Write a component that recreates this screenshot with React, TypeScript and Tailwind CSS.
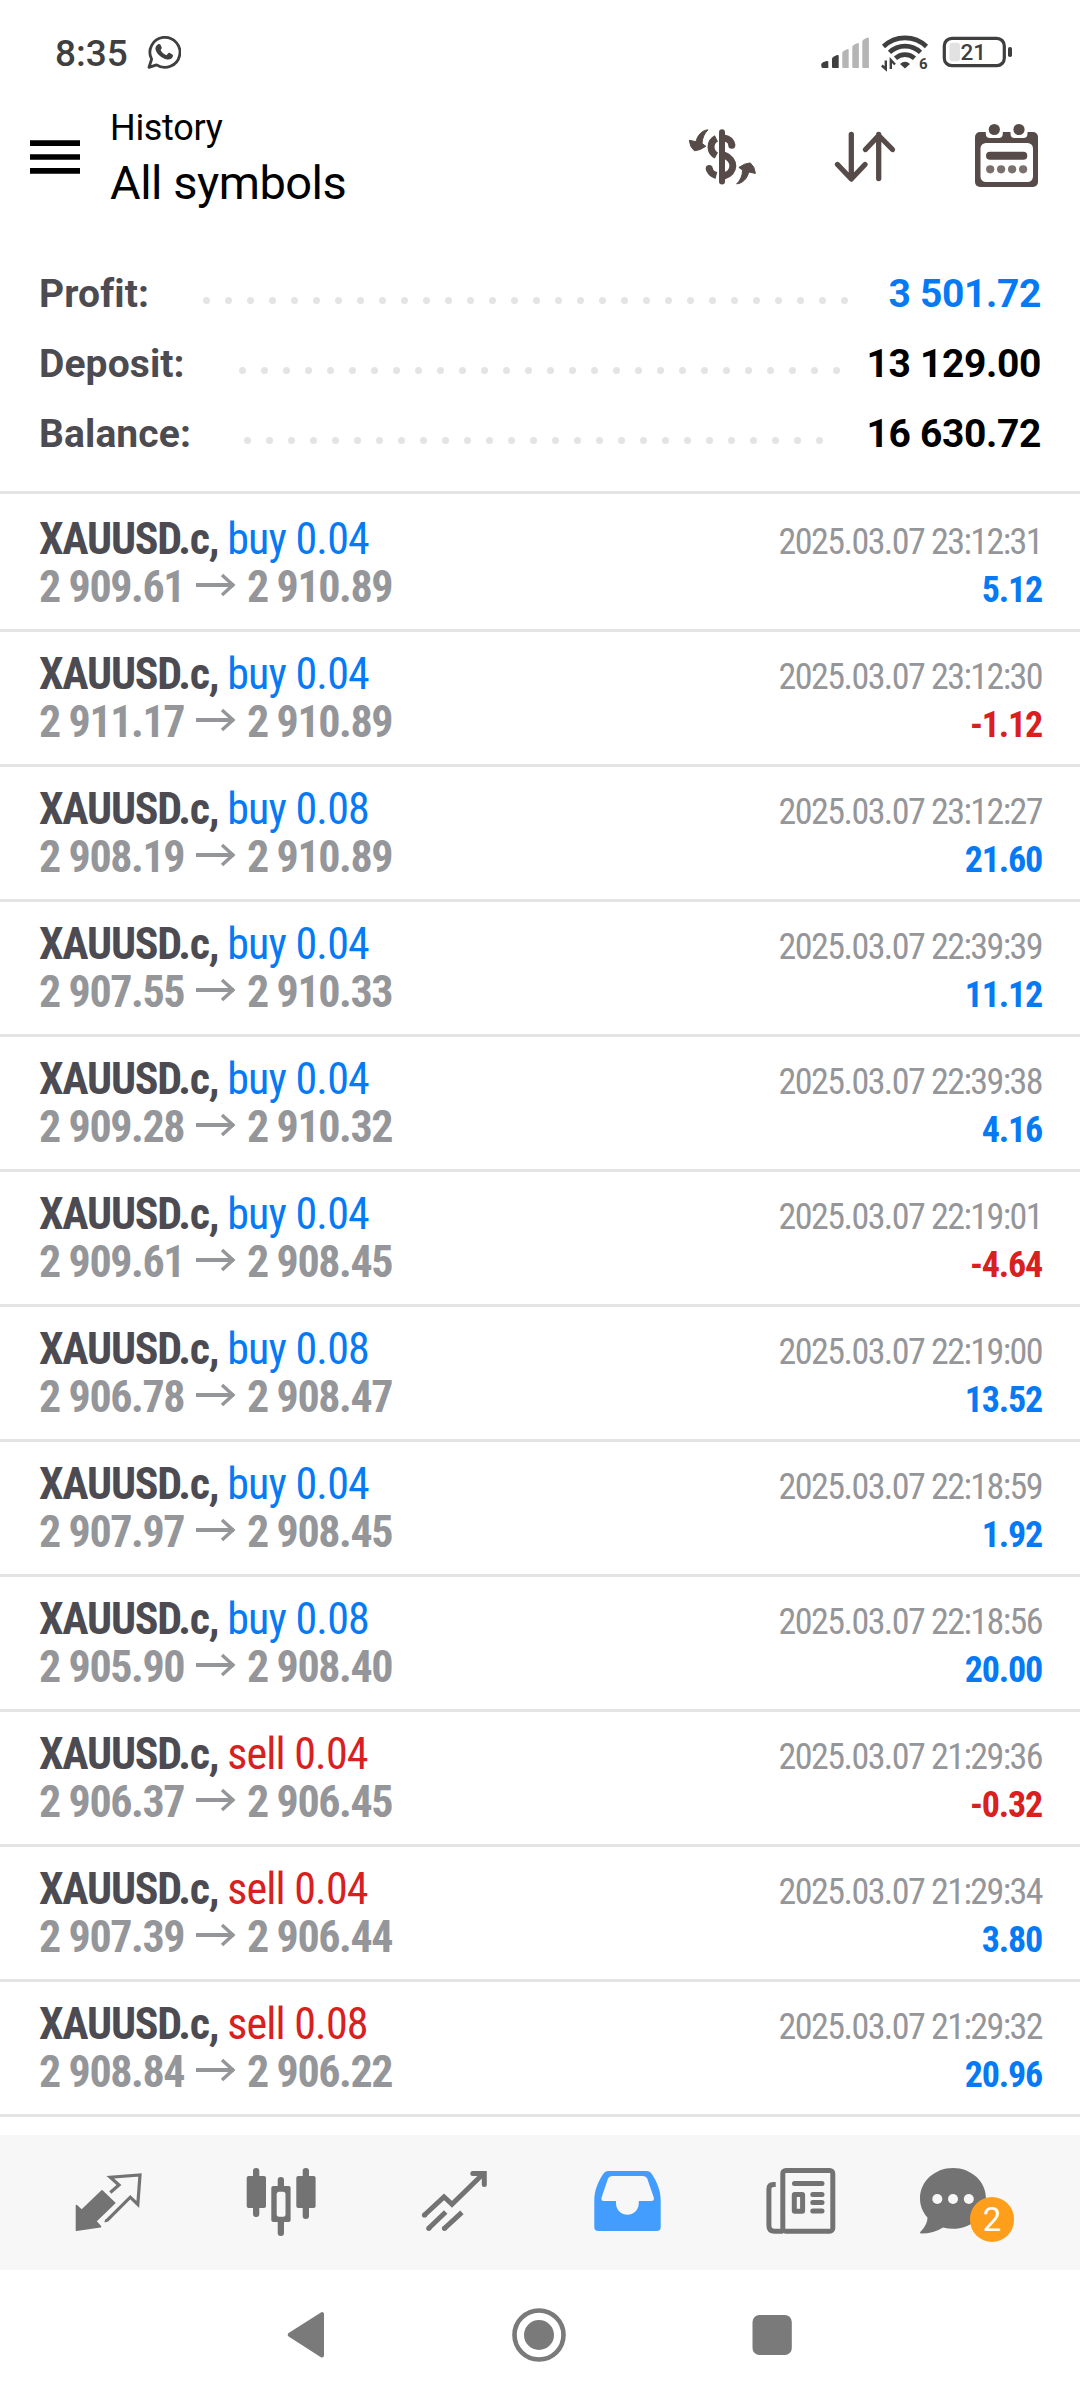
import type { ReactNode } from "react";
import clsx from "clsx";

const SUMMARY = [
  { label: "Profit:", value: "3 501.72", dots: 30, color: "text-[#067af5]", pad: "pr-[193px]" },
  { label: "Deposit:", value: "13 129.00", dots: 28, color: "text-black", pad: "pr-[201px]" },
  { label: "Balance:", value: "16 630.72", dots: 27, color: "text-black", pad: "pr-[218px]" },
];

const DEALS = [
  { side: "buy", lots: "0.04", open: "2 909.61", close: "2 910.89", time: "2025.03.07 23:12:31", profit: "5.12" },
  { side: "buy", lots: "0.04", open: "2 911.17", close: "2 910.89", time: "2025.03.07 23:12:30", profit: "-1.12" },
  { side: "buy", lots: "0.08", open: "2 908.19", close: "2 910.89", time: "2025.03.07 23:12:27", profit: "21.60" },
  { side: "buy", lots: "0.04", open: "2 907.55", close: "2 910.33", time: "2025.03.07 22:39:39", profit: "11.12" },
  { side: "buy", lots: "0.04", open: "2 909.28", close: "2 910.32", time: "2025.03.07 22:39:38", profit: "4.16" },
  { side: "buy", lots: "0.04", open: "2 909.61", close: "2 908.45", time: "2025.03.07 22:19:01", profit: "-4.64" },
  { side: "buy", lots: "0.08", open: "2 906.78", close: "2 908.47", time: "2025.03.07 22:19:00", profit: "13.52" },
  { side: "buy", lots: "0.04", open: "2 907.97", close: "2 908.45", time: "2025.03.07 22:18:59", profit: "1.92" },
  { side: "buy", lots: "0.08", open: "2 905.90", close: "2 908.40", time: "2025.03.07 22:18:56", profit: "20.00" },
  { side: "sell", lots: "0.04", open: "2 906.37", close: "2 906.45", time: "2025.03.07 21:29:36", profit: "-0.32" },
  { side: "sell", lots: "0.04", open: "2 907.39", close: "2 906.44", time: "2025.03.07 21:29:34", profit: "3.80" },
  { side: "sell", lots: "0.08", open: "2 908.84", close: "2 906.22", time: "2025.03.07 21:29:32", profit: "20.96" },
];

const BLUE = "text-[#067af5]";
const RED = "text-[#d82020]";

function StatusBar() {
  return (
    <div className="flex h-[104px] items-center pl-[55px] pr-[67px] text-[#3f3f3f]">
      <span className="w-[92px] pt-[3px] text-[37px] font-medium leading-[44px]">8:35</span>
      <svg width="34" height="34" viewBox="0 0 34 34" fill="none">
        <path d="M2 32.3 4.6 24.2A15 15 0 1 1 9.6 29.8Z" stroke="currentColor" strokeWidth="2.8" strokeLinejoin="round" />
        <path
          d="M10.8 9.4c1.2-.8 2.4-.5 2.8.5l1.1 2.7c.3.8-.4 1.5-1.1 2.4 1.3 2.5 3.2 4.2 5.8 5.3l1.9-2.1c.5-.5 1-.4 1.6-.1l2.4 1.3c.8.5.8 1.1.5 2.2-.7 2.3-3.1 3.4-5.6 2.9-5.9-1.2-10.2-5.2-11.6-9.7-.6-2.3.4-4.3 2.2-5.4Z"
          fill="currentColor"
        />
      </svg>
      <div className="ml-auto flex items-center">
        <svg width="50" height="34" viewBox="0 0 50 34">
          <path d="M1.3 31V29.5Q1.3 28 3 27.3L6.5 26Q8.3 25.5 8.3 27V33H2.8Q1.3 33 1.3 31Z" fill="currentColor" />
          <path d="M12 32V24Q12 22.5 13.5 21.7L17 20Q18.7 19.5 18.7 21V33H13Q12 33 12 32Z" fill="currentColor" />
          <g fill="#b5b5b5">
            <path d="M22.3 32V18Q22.3 16.5 24 15.7L27 14.2Q28.7 13.7 28.7 15V33H23.3Q22.3 33 22.3 32Z" />
            <path d="M32.3 32V12Q32.3 10.5 34 9.7L37 8.2Q38.9 7.7 38.9 9V33H33.3Q32.3 33 32.3 32Z" />
            <path d="M42.3 32V6.5Q42.3 5 44 4.2L47 2.7Q48.9 2.2 48.9 3.5V33H43.3Q42.3 33 42.3 32Z" />
          </g>
        </svg>
        <svg className="ml-[11px] overflow-visible" width="48" height="36" viewBox="0 0 48 36">
          <g fill="none" stroke="currentColor" strokeWidth="4.6">
            <path d="M2.5 12.5A31 31 0 0 1 45.5 12.5" />
            <path d="M8.5 18.3A22.5 22.5 0 0 1 39.5 18.3" />
            <path d="M14.5 24.3A14 14 0 0 1 33.5 24.3" />
          </g>
          <path d="M24 34.5 19 30Q24 25.5 29 30Z" fill="currentColor" />
          <path d="M4.8 26.5V35L.8 31.5M9.8 35V26L14 30.5" fill="none" stroke="currentColor" strokeWidth="2.4" />
          <text x="38" y="34.5" fontSize="15" fontWeight="700" fill="currentColor">6</text>
        </svg>
        <svg className="ml-[13px]" width="71" height="32" viewBox="0 0 71 32">
          <rect x="2.3" y="2.3" width="60" height="27.4" rx="7.5" fill="none" stroke="currentColor" strokeWidth="3.2" />
          <rect x="7.5" y="6.8" width="10.5" height="18.4" rx="3" fill="#e2e2e2" />
          <rect x="66" y="11" width="4" height="10" rx="1.8" fill="currentColor" />
          <text x="18.5" y="24.2" fontSize="22.5" fontWeight="500" fill="currentColor">21</text>
        </svg>
      </div>
    </div>
  );
}

function Header() {
  return (
    <header className="flex h-[106px] items-center pl-[30px] pr-9 text-[#564b48]">
      <svg width="50" height="34" viewBox="0 0 50 34" fill="#000">
        <path d="M0 .3H50V6H0ZM0 14.2H50V19.8H0ZM0 28.1H50V33.8H0Z" />
      </svg>
      <div className="ml-[30px] flex flex-col gap-[5px] self-start pt-[2px] text-black">
        <span className="text-[36px] leading-[44px] tracking-[-0.3px]">History</span>
        <span className="text-[47px] leading-[56px] tracking-[-0.5px]">All symbols</span>
      </div>
      <svg className="ml-auto" width="76" height="64" viewBox="0 0 76 64" fill="none">
        <path d="M37 7.2V56.5" stroke="currentColor" strokeWidth="6" strokeLinecap="round" />
        <g stroke="currentColor" strokeWidth="7">
          <path d="M31.4 13.3C24 17 24.5 27 31.4 30.5" />
          <path d="M39 13C44 13.5 46.5 17 46.8 20" />
          <path d="M39 30C51 34.5 50.5 48 39 51" />
          <path d="M24.3 43.5C25 47.5 27.5 49.5 31.4 50.5" />
        </g>
        <circle cx="46.8" cy="20.3" r="3.5" fill="currentColor" />
        <circle cx="24.2" cy="43.5" r="3.5" fill="currentColor" />
        <g fill="currentColor" stroke="currentColor" strokeLinejoin="round">
          <path d="M23 4.8C17 5.5 12.5 10 11 16.7L4.3 15.3Q5 22.5 9.5 25.8 15 25.5 20.8 21.3L17 18.5C17.3 13 19.5 8 23 4.8Z" />
          <path d="M51.7 58.9C57.7 58.2 62.2 53.7 63.7 47L70.4 48.4Q69.7 41.2 65.2 37.9 59.7 38.2 53.9 42.4L57.7 45.2C57.4 50.7 55.2 55.7 51.7 58.9Z" />
        </g>
      </svg>
      <svg
        className="ml-[69px]"
        width="70"
        height="64"
        viewBox="0 0 70 64"
        fill="none"
        stroke="currentColor"
        strokeWidth="5.3"
        strokeLinecap="round"
        strokeLinejoin="round"
      >
        <path d="M21.3 9.5V53.5M7.5 39.5 21.3 54 35 39.5" />
        <path d="M48.7 53.5V9.5M35.5 24.5 48.7 10.5 62.5 24.5" />
      </svg>
      <svg className="ml-[70px]" width="74" height="74" viewBox="0 0 74 74">
        <rect x="5" y="12" width="63" height="55" rx="5" fill="currentColor" />
        <rect x="10.5" y="23" width="52.5" height="39" rx="5.5" fill="#fff" />
        <path d="M15.8 11H32.8V13.5Q32.8 18 28.5 18H20Q15.8 18 15.8 13.5ZM40.5 11H57.5V13.5Q57.5 18 53.2 18H44.7Q40.5 18 40.5 13.5Z" fill="#fff" />
        <g fill="currentColor">
          <circle cx="24.3" cy="9.5" r="5.6" />
          <circle cx="49" cy="9.5" r="5.6" />
          <rect x="16" y="31.8" width="41.3" height="8" rx="4" />
        </g>
        <g fill="#7a716e">
          <circle cx="20.2" cy="49.3" r="4.1" />
          <circle cx="31.1" cy="49.3" r="4.1" />
          <circle cx="42.1" cy="49.3" r="4.1" />
          <circle cx="53.1" cy="49.3" r="4.1" />
        </g>
      </svg>
    </header>
  );
}

function Summary() {
  return (
    <section className="border-b-[3px] border-[#e4e4e4] px-[39px] pb-[22px] pt-[49px] text-[39px] font-bold">
      {SUMMARY.map((row) => (
        <div key={row.label} className="grid h-[70px] items-center">
          <div className="col-start-1 row-start-1 flex justify-between leading-[70px]">
            <span className="tracking-[0.1px] text-[#4c4b51]">{row.label}</span>
            <span className={clsx("tracking-[-0.35px]", row.color)}>{row.value}</span>
          </div>
          <div className={clsx("col-start-1 row-start-1 flex justify-end gap-[15px] pt-[13px]", row.pad)}>
            {Array.from({ length: row.dots }, (_, i) => (
              <span key={i} className="size-[7px] shrink-0 rounded-full bg-[#e4e4e4]" />
            ))}
          </div>
        </div>
      ))}
    </section>
  );
}

function Arrow() {
  return (
    <svg className="-mt-1 ml-[13px] mr-[9px]" width="42" height="24" viewBox="0 0 42 24" fill="none" stroke="currentColor">
      <path d="M0 12H38" strokeWidth="3.8" />
      <path d="M26 2 37 12 26 22" strokeWidth="3.4" />
    </svg>
  );
}

function DealRow({ deal }: { deal: (typeof DEALS)[number] }) {
  return (
    <li className="flex h-[135px] justify-between whitespace-nowrap border-b-[3px] border-[#e4e4e4] pl-[39px] pr-[38px] pt-[18px] font-[Roboto_Condensed,Roboto,sans-serif] leading-[48px] [font-stretch:75%] first:h-[138px] first:pt-[21px]">
      <div className="text-[44px]">
        <div>
          <span className="font-bold tracking-[-1.25px] text-[#4c4b51]">XAUUSD.c, </span>
          <span className={clsx("tracking-[-0.8px]", deal.side === "buy" ? BLUE : RED)}>
            {deal.side} {deal.lots}
          </span>
        </div>
        <div className="flex items-center font-bold tracking-[-1.4px] text-[#959699]">
          <span className="w-[144px]">{deal.open}</span>
          <Arrow />
          {deal.close}
        </div>
      </div>
      <div className="pt-[3px] text-right text-[36px]">
        <div className="tracking-[-1.55px] text-[#959699]">{deal.time}</div>
        <div className={clsx("font-bold tracking-[-1.2px]", deal.profit.startsWith("-") ? RED : BLUE)}>
          {deal.profit}
        </div>
      </div>
    </li>
  );
}

function Tab({ children }: { children: ReactNode }) {
  return <div className="flex w-[173px] items-center justify-center">{children}</div>;
}

function TabBar() {
  return (
    <nav className="flex h-[135px] bg-[#f7f7f7] pl-[22px] text-[#737373]">
      <Tab>
        <svg width="73" height="71" viewBox="0 0 73 71">
          <path
            d="M4.5 38.5 9.7 43.3 30 23.8 42.7 36 23.8 54.3 28.5 59.6 4.5 63.3Z"
            fill="currentColor"
            stroke="currentColor"
            strokeWidth="1.6"
            strokeLinejoin="round"
          />
          <path d="M38.3 25.5 47 18 38.3 10.2 68 7.9 65.8 37.5 58.3 30.2 35.5 53Q34 54 32.8 53.7" fill="none" stroke="currentColor" strokeWidth="3.2" />
        </svg>
      </Tab>
      <Tab>
        <svg width="73" height="71" viewBox="0 0 73 71" fill="currentColor">
          <rect x="1.7" y="9" width="19.3" height="32" rx="2" />
          <rect x="8" y="1" width="6.3" height="49" rx="3" />
          <rect x="32.7" y="10" width="6.3" height="59" rx="3" />
          <rect x="26.3" y="19" width="19.3" height="36" rx="2" />
          <rect x="31.7" y="24.7" width="8.8" height="25" rx="2.5" fill="#f7f7f7" />
          <rect x="51.3" y="9" width="19.3" height="32" rx="2" />
          <rect x="57.7" y="1" width="6.3" height="51" rx="3" />
        </svg>
      </Tab>
      <Tab>
        <svg width="73" height="71" viewBox="0 0 73 71" fill="none" stroke="currentColor" strokeWidth="5">
          <path d="M6.5 48 26 29.8 34 37.3 65.5 6.5" />
          <path d="M54.8 6.5H66.3V17.5" strokeLinecap="round" />
          <path d="M10.8 61.3 27.7 45M26.5 61.3 43.9 45.3" />
          <g fill="currentColor" stroke="none">
            <circle cx="6.5" cy="48" r="2.6" />
            <circle cx="10.8" cy="61.3" r="2.6" />
            <circle cx="26.5" cy="61.3" r="2.6" />
          </g>
        </svg>
      </Tab>
      <Tab>
        <svg width="73" height="71" viewBox="0 0 73 71">
          <path
            d="M17.5 4H55.5Q59 4 60.8 7C66 15 69.7 23 69.7 34V60Q69.7 64 65.7 64H7.3Q3.3 64 3.3 60V34C3.3 23 7 15 12.2 7Q14 4 17.5 4ZM21 9Q18 9 17 11.5L10.6 30.5Q9.7 34 13 34H25V36C25 51.5 47.8 51.5 47.8 36V34H60Q63.7 34 62.8 30.5L56.2 11.5Q55.3 9 52 9Z"
            fill="#429dff"
            fillRule="evenodd"
          />
        </svg>
      </Tab>
      <Tab>
        <svg width="73" height="71" viewBox="0 0 73 71" fill="none" stroke="currentColor" strokeWidth="5">
          <rect x="18.8" y="3.5" width="50" height="60.7" rx="3" />
          <path d="M11.7 17.4H9.5Q4.9 17.4 4.9 22V58.5Q4.9 64.2 10.5 64.2H19" />
          <path d="M30.5 16.5H58M48.8 27.5H58M48.8 35.6H58M48.8 44H58" strokeLinecap="round" />
          <rect x="30.3" y="27.5" width="8.3" height="16.8" rx=".5" />
        </svg>
      </Tab>
      <Tab>
        <div className="relative -ml-10">
          <svg width="73" height="71" viewBox="0 0 73 71">
            <path
              d="M36 1C54.3 1 69 14.5 69 31.4S54.3 61.7 36 61.7Q31 61.7 26 60.5 17 66.5 4 66.5 2 65.7 4 64.2 10.5 57.5 10.5 50.5C6 45.5 3 38.8 3 31.4 3 14.5 17.7 1 36 1Z"
              fill="currentColor"
            />
            <g fill="#f7f7f7">
              <circle cx="20.3" cy="32" r="5" />
              <circle cx="36" cy="32" r="5" />
              <circle cx="51.8" cy="32" r="5" />
            </g>
          </svg>
          <span className="absolute left-[53px] top-[30px] h-[45px] w-[44px] rounded-full bg-[#ff9e1b] text-center text-[33px] leading-[45px] text-white">
            2
          </span>
        </div>
      </Tab>
    </nav>
  );
}

function SystemNav() {
  return (
    <div className="flex h-[130px] items-center gap-[172px] pl-[275px] text-[#7a7a7a]">
      <svg width="61" height="60" viewBox="0 0 61 60" fill="currentColor" stroke="currentColor" strokeWidth="4" strokeLinejoin="round">
        <path d="M14.7 29.8 47 9.2V50.5Z" />
      </svg>
      <svg width="61" height="60" viewBox="0 0 61 60">
        <circle cx="31" cy="30" r="24.5" fill="none" stroke="currentColor" strokeWidth="4.6" />
        <circle cx="31" cy="30" r="15" fill="currentColor" />
      </svg>
      <svg width="61" height="60" viewBox="0 0 61 60" fill="currentColor">
        <rect x="11.5" y="10" width="39.3" height="40" rx="7" />
      </svg>
    </div>
  );
}

export default function App() {
  return (
    <div className="h-[2400px] w-[1080px] overflow-hidden bg-white font-[Roboto,sans-serif]">
      <StatusBar />
      <Header />
      <Summary />
      <ul className="h-[1641px]">
        {DEALS.map((deal) => (
          <DealRow key={deal.time} deal={deal} />
        ))}
      </ul>
      <TabBar />
      <SystemNav />
    </div>
  );
}
